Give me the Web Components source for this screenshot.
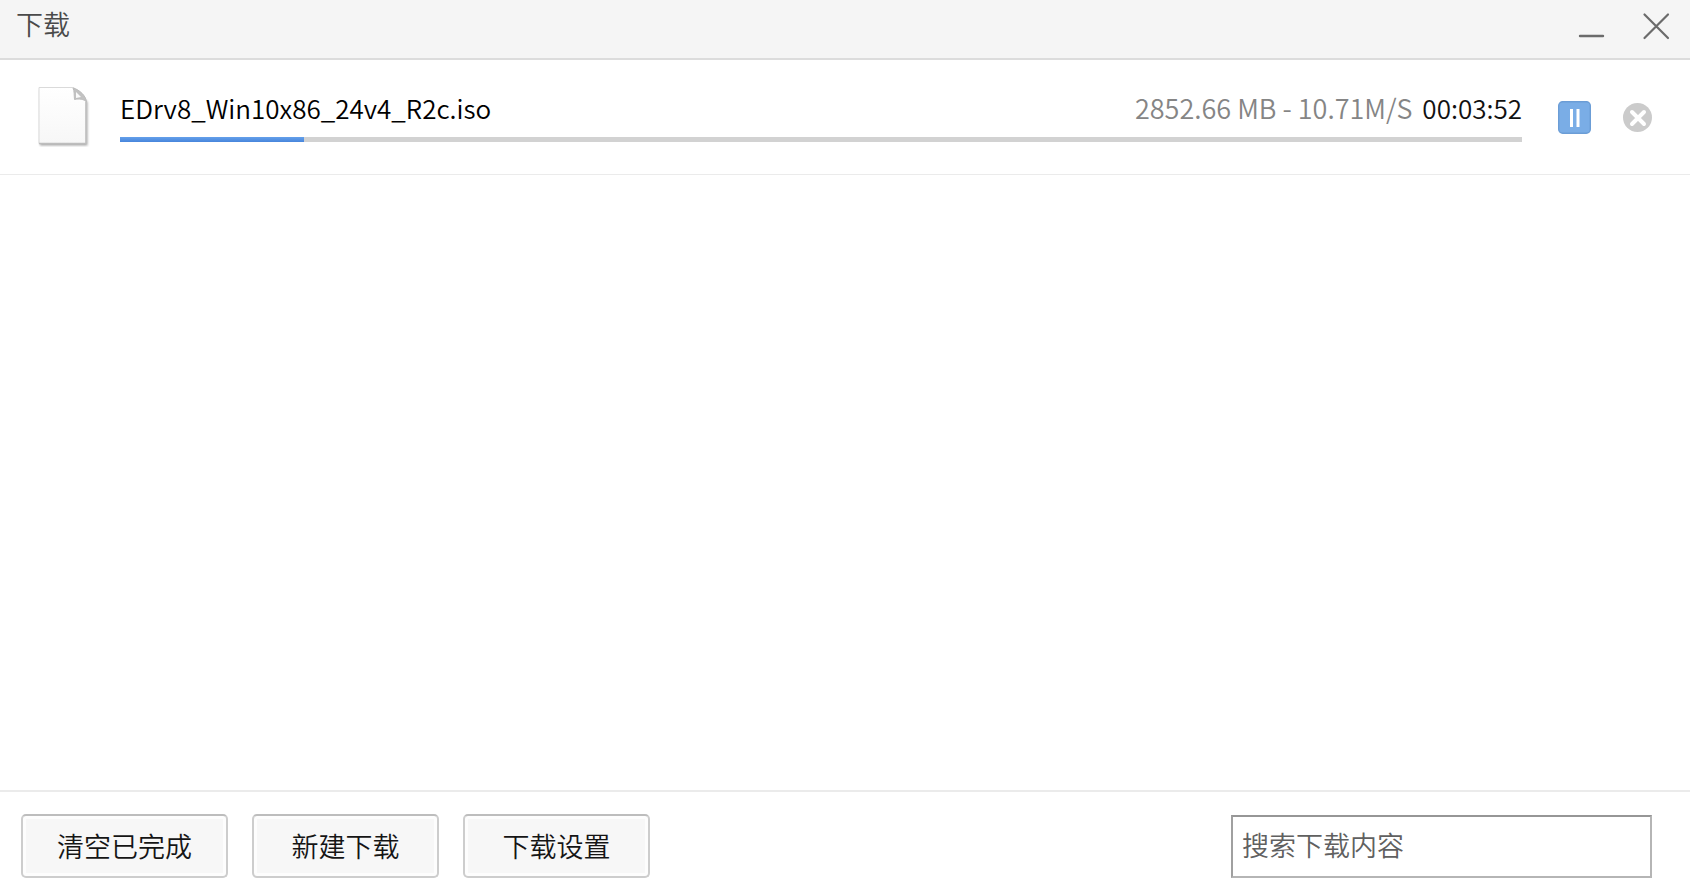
<!DOCTYPE html>
<html lang="zh-CN">
<head>
<meta charset="utf-8">
<title>下载</title>
<style>
html, body {
	height: 100%;
	margin: 0;
}
body {
	background: #FFFFFF;
	font-family: "Noto Sans CJK SC", sans-serif;
	font-size: 27px;
	font-weight: 350;
	line-height: 40px;
	color: #111111;
}
</style>
</head>
<body>
<download-window>
	<window-header slot="header">下载</window-header>
	<download-item total="2852.66 MB" speed="10.71M/S" left="00:03:52" progress="13.1">EDrv8_Win10x86_24v4_R2c.iso</download-item>
	<tool-button slot="actions">清空已完成</tool-button>
	<tool-button slot="actions">新建下载</tool-button>
	<tool-button slot="actions">下载设置</tool-button>
	<search-box slot="search" label="搜索下载内容"></search-box>
</download-window>
<script>
class DownloadWindow extends HTMLElement {
	constructor() {
		super();
		let shadowRoot = this.attachShadow({mode: 'open'});
		shadowRoot.innerHTML = `
		<style>
		:host {
			display: flex;
			flex-direction: column;
			min-height: 100%;
		}
		main {
			flex: 1;
		}
		footer {
			display: flex;
			justify-content: space-between;
			align-items: center;
			padding: 21px 38px 14px 21px;
			border-top: 2px solid #EBEBEB;
		}
		.actions {
			display: flex;
			gap: 24px;
		}
		</style>
		<slot name="header"></slot>
		<main><slot></slot></main>
		<footer>
			<div class="actions"><slot name="actions"></slot></div>
			<slot name="search"></slot>
		</footer>`;
	}
}
window.customElements.define('download-window', DownloadWindow);

class WindowHeader extends HTMLElement {
	constructor() {
		super();
		let shadowRoot = this.attachShadow({mode: 'open'});
		shadowRoot.innerHTML = `
		<style>
		:host {
			display: block;
		}
		header {
			display: flex;
			justify-content: space-between;
			align-items: center;
			padding: 4px 20px 14px 16px;
			background: #F5F5F5;
			border-bottom: 2px solid #DCDCDC;
		}
		h1 {
			margin: 0;
			font: inherit;
			color: #4A4A4A;
		}
		.controls {
			display: flex;
			gap: 36px;
			padding: 8px 0 4px;
		}
		button {
			display: block;
			padding: 0;
			border: 0;
			background: none;
			cursor: pointer;
		}
		svg {
			display: block;
			stroke: #6B6B6B;
			stroke-linecap: round;
			fill: none;
		}
		</style>
		<header>
			<h1><slot></slot></h1>
			<div class="controls">
				<button type="button" aria-label="最小化">
					<svg width="28" height="28" viewBox="0 0 28 28"><path d="M2 24H25" stroke-width="2.4"/></svg>
				</button>
				<button type="button" aria-label="关闭">
					<svg width="28" height="28" viewBox="0 0 28 28"><path d="M2.500 2.500L26 26M26 2.500L2.500 26" stroke-width="2.2"/></svg>
				</button>
			</div>
		</header>`;
	}
}
window.customElements.define('window-header', WindowHeader);

class DownloadItem extends HTMLElement {
	constructor() {
		super();
		let shadowRoot = this.attachShadow({mode: 'open'});
		shadowRoot.innerHTML = `
		<style>
		:host {
			display: flex;
			align-items: center;
			padding: 27px 38px 27px 36px;
			border-bottom: 1px solid #EBEBEB;
		}
		svg {
			display: block;
		}
		.content {
			flex: 1;
			min-width: 0;
			padding: 0 36px 0 30px;
		}
		.info {
			display: flex;
			justify-content: space-between;
			height: 44px;
			line-height: 30px;
			font-size: 26px;
		}
		.name {
			color: #000000;
		}
		.amount {
			font-size: 27px;
			color: #858585;
		}
		.left {
			margin-left: 4px;
			color: #111111;
		}
		.track {
			height: 5px;
			background: #D2D2D2;
		}
		.fill {
			height: 100%;
			background: linear-gradient(#64A0EA, #4785DC);
		}
		.buttons {
			display: flex;
			align-items: center;
			gap: 32px;
		}
		button {
			display: block;
			padding: 0;
			border: 0;
			background: none;
			cursor: pointer;
		}
		</style>
		<svg width="54" height="60" viewBox="0 0 54 60" aria-hidden="true">
			<defs>
				<linearGradient id="paper" x1="0" y1="0" x2="0" y2="1">
					<stop offset="0" stop-color="#FFFFFF"/>
					<stop offset="1" stop-color="#F7F7F7"/>
				</linearGradient>
				<filter id="shadow" x="-20%" y="-20%" width="140%" height="140%">
					<feGaussianBlur stdDeviation="1"/>
				</filter>
			</defs>
			<path d="M4 3H38L51.500 15V58.500H4Z" fill="#A8A8A8" filter="url(#shadow)"/>
			<path d="M3 .5H37C43 3 50 9 50 15V56.500H3Z" fill="url(#paper)" stroke="#DADADA"/>
			<path d="M50 15V56.500H3" fill="none" stroke="#BDBDBD" stroke-width="1.500"/>
			<path d="M37 1C44 3 50 9 50.500 15C48 12 43 11.500 38.500 12.500C38 8 38.500 4 37 1Z" fill="#C2C2C2" stroke="#BDBDBD"/>
			<path d="M40 5L45 10L40 11Z" fill="#FAFAFA"/>
		</svg>
		<div class="content">
			<div class="info">
				<span class="name"><slot></slot></span>
				<span class="status"><span class="amount"></span> <span class="left"></span></span>
			</div>
			<div class="track" role="progressbar" aria-label="下载进度"><div class="fill"></div></div>
		</div>
		<div class="buttons">
			<button type="button" aria-label="暂停">
				<svg width="33" height="33" viewBox="0 0 33 33">
					<rect x=".7" y=".7" width="31.600" height="31.600" rx="4" fill="#7AADE6" stroke="#6B9DD6" stroke-width="1.400"/>
					<path d="M13.500 8V26M20 8V26" stroke="#FFFFFF" stroke-width="3"/>
				</svg>
			</button>
			<button type="button" aria-label="取消">
				<svg width="29" height="29" viewBox="0 0 29 29">
					<circle cx="14.500" cy="14.500" r="14.500" fill="#CBCBCB"/>
					<path d="M9 9L21 21M21 9L9 21" stroke="#FFFFFF" stroke-width="4" stroke-linecap="round"/>
				</svg>
			</button>
		</div>`;
	}

	connectedCallback() {
		let progress = this.getAttribute('progress');
		let track = this.shadowRoot.querySelector('.track');
		this.shadowRoot.querySelector('.amount').textContent = `${this.getAttribute('total')} - ${this.getAttribute('speed')}`;
		this.shadowRoot.querySelector('.left').textContent = this.getAttribute('left');
		this.shadowRoot.querySelector('.fill').style.width = `${progress}%`;
		track.setAttribute('aria-valuenow', progress);
	}
}
window.customElements.define('download-item', DownloadItem);

class ToolButton extends HTMLElement {
	constructor() {
		super();
		let shadowRoot = this.attachShadow({mode: 'open'});
		shadowRoot.innerHTML = `
		<style>
		:host {
			display: block;
		}
		button {
			display: block;
			min-width: 187px;
			height: 64px;
			padding: 0 34px;
			border: 2px solid #CDCDCD;
			border-top-color: #BDBDBD;
			border-radius: 5px;
			background: #F7F7F7;
			box-shadow: inset 0 0 0 3px #FDFDFD;
			font: inherit;
			color: #151515;
			cursor: pointer;
		}
		button:hover, button:focus {
			background: #EFEFEF;
		}
		</style>
		<button type="button"><slot></slot></button>`;
	}
}
window.customElements.define('tool-button', ToolButton);

class SearchBox extends HTMLElement {
	constructor() {
		super();
		let shadowRoot = this.attachShadow({mode: 'open'});
		shadowRoot.innerHTML = `
		<style>
		:host {
			display: block;
			flex: 0 1 421px;
			padding-top: 2px;
		}
		input {
			display: block;
			box-sizing: border-box;
			width: 100%;
			height: 63px;
			padding: 0 9px 4px;
			border: 2px solid #B5B5B5;
			border-top-color: #969696;
			border-left-color: #A0A0A0;
			border-radius: 0;
			outline: none;
			background: #FFFFFF;
			font: inherit;
			color: #111111;
		}
		input::placeholder {
			color: #606060;
			opacity: 1;
		}
		</style>
		<input type="text">`;
	}

	connectedCallback() {
		let input = this.shadowRoot.querySelector('input');
		input.placeholder = this.getAttribute('label');
		input.setAttribute('aria-label', this.getAttribute('label'));
	}
}
window.customElements.define('search-box', SearchBox);
</script>
</body>
</html>
